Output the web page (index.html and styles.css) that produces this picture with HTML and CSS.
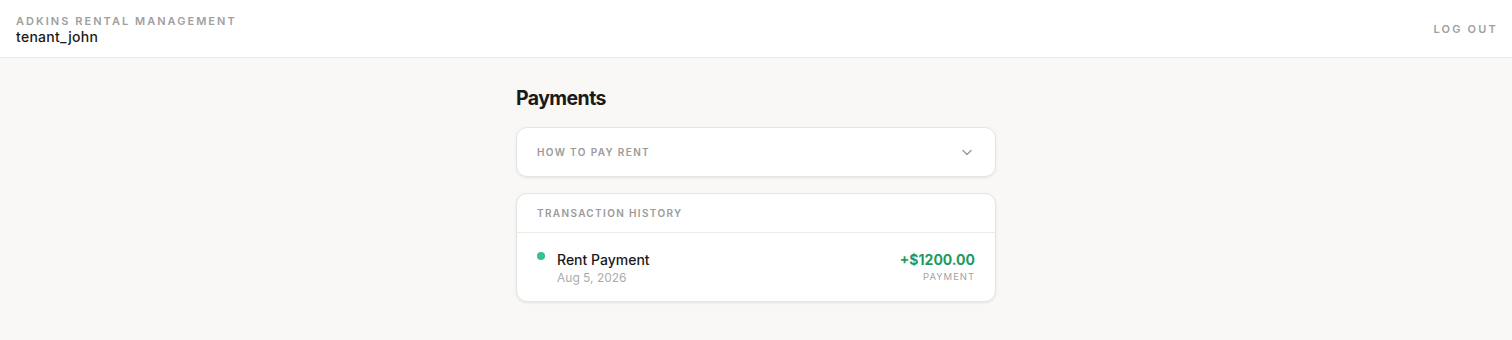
FILE: index.html
```html
<!DOCTYPE html>
<html lang="en">
<head>
<meta charset="utf-8">
<title>Payments</title>
<link rel="stylesheet" href="styles.css">
</head>
<body>
<header class="topbar">
  <div class="brand">
    <div class="brand-name">Adkins Rental Management</div>
    <div class="user">tenant_john</div>
  </div>
  <button class="logout">Log out</button>
</header>
<main class="main">
  <h1 class="title">Payments</h1>
  <section class="card accordion">
    <span class="label">How to pay rent</span>
    <svg class="chev" width="12" height="12" viewBox="0 0 12 12" fill="none" stroke="#9a9a9a" stroke-width="1.4" stroke-linecap="round" stroke-linejoin="round"><path d="M2 4.5 6 8.5 10 4.5"/></svg>
  </section>
  <section class="card history">
    <div class="history-head"><span class="label">Transaction history</span></div>
    <div class="tx">
      <span class="dot"></span>
      <div class="tx-info">
        <div class="tx-name">Rent Payment</div>
        <div class="tx-date">Aug 5, 2026</div>
      </div>
      <div class="tx-amt">
        <div class="amount">+$1200.00</div>
        <div class="kind">Payment</div>
      </div>
    </div>
  </section>
</main>
</body>
</html>
```
FILE: styles.css
```css
* { box-sizing: border-box; }
html, body { margin: 0; padding: 0; }
body {
  font-family: Inter, "Noto Sans", sans-serif;
  background: #f9f8f6;
  color: #1a1a1a;
  height: 340px;
}
.topbar {
  background: #fff;
  border-bottom: 1px solid #e8e7e4;
  height: 58px;
  display: flex;
  align-items: center;
  justify-content: space-between;
  padding: 0 16px;
}
.brand { display: flex; flex-direction: column; padding-top: 3px; }
.brand-name {
  font-size: 11px;
  font-weight: 600;
  letter-spacing: 0.185em;
  text-transform: uppercase;
  color: #a0a0a0;
  line-height: 15px;
  margin-bottom: -1px;
}
.user { font-size: 14px; font-weight: 500; line-height: 18px; color: #1a1a1a; letter-spacing: 0.02em; }
.logout {
  background: none; border: 0; padding: 0;
  font-family: inherit;
  font-size: 11px; font-weight: 600;
  letter-spacing: 0.2em;
  margin-right: -2px;
  text-transform: uppercase;
  color: #a0a0a0;
}
.main { width: 480px; margin: 0 auto; padding-top: 28px; }
.title { font-size: 19.5px; font-weight: 700; margin: 0 0 18px; letter-spacing: -0.03em; line-height: 22px; padding-top: 1px; }
.card {
  background: #fff;
  border: 1px solid #e6e5e2;
  border-radius: 11px;
  box-shadow: 0 1px 3px rgba(0,0,0,0.08);
}
.label {
  font-size: 10px;
  font-weight: 600;
  letter-spacing: 0.135em;
  text-transform: uppercase;
  color: #9a9a9a;
}
.accordion {
  height: 50px;
  display: flex;
  align-items: center;
  justify-content: space-between;
  padding: 0 22px 0 20px;
  margin-bottom: 16px;
}
.history-head { height: 39px; display: flex; align-items: center; padding: 0 20px; border-bottom: 1px solid #ebeae7; }
.tx { display: flex; align-items: flex-start; padding: 18px 20px 14px 20px; gap: 12px; }
.dot { width: 8px; height: 8px; border-radius: 50%; background: #34c48b; margin-top: 1px; }
.tx-info { flex: 1; }
.tx-name { font-size: 14px; font-weight: 500; line-height: 18px; }
.tx-date { font-size: 12px; color: #ababab; line-height: 18px; }
.tx-amt { text-align: right; }
.amount { font-size: 14px; font-weight: 700; color: #1f9a63; line-height: 18px; }
.kind { font-size: 9.5px; letter-spacing: 0.1em; text-transform: uppercase; color: #a3a3a3; line-height: 16px; }
```
